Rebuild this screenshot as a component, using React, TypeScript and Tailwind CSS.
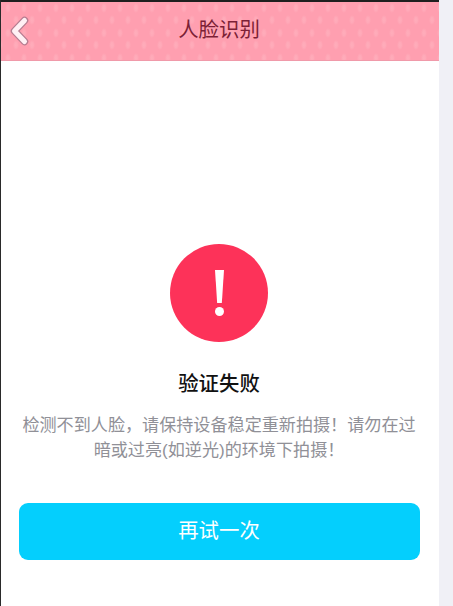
export default function App() {
  return (
    <div className="flex h-[606px] w-[453px] overflow-hidden bg-[#f0f0f6] font-['Liberation_Sans','Noto_Sans_CJK_SC',sans-serif]">
      <div className="w-px shrink-0 bg-[#2a2a2a]" />
      <div className="flex w-[438px] shrink-0 flex-col bg-white">
        <div className="h-[2px] shrink-0 bg-[#1f1f1f]" />
        <header className="relative flex h-[59px] shrink-0 items-center justify-center border-b border-[#f09aaa] bg-[#ff9fb0] bg-[radial-gradient(ellipse_3px_5px_at_8px_6px,#ffadba_0%,#ffa9b8_50%,transparent_100%),radial-gradient(ellipse_3px_5px_at_0px_18px,#ffadba_0%,#ffa9b8_50%,transparent_100%),radial-gradient(ellipse_3px_5px_at_16px_18px,#ffadba_0%,#ffa9b8_50%,transparent_100%)] bg-[length:16px_25px] bg-[position:-1px_0px]">
          <svg className="absolute left-[8px] top-[13px]" width="20" height="32" viewBox="0 0 20 32" fill="none">
            <path d="M15.5 5.5 L5.5 16 L15.5 26.5" stroke="#b57d90" strokeWidth="7.5" strokeLinecap="round" strokeLinejoin="round" />
            <path d="M15.5 5.5 L5.5 16 L15.5 26.5" stroke="#fff0f4" strokeWidth="5" strokeLinecap="round" strokeLinejoin="round" />
          </svg>
          <h1 className="mr-[2px] mb-[1px] text-[20.4px] font-normal leading-none text-[#7c1f36]">人脸识别</h1>
        </header>
        <main className="flex flex-1 flex-col items-center pl-[17px] pr-[19px]">
          <div className="mt-[183px] flex size-[98px] flex-col items-center rounded-full bg-[#fd3259]">
            <div className="ml-px mt-[26px] h-[33px] w-[9px] bg-white [clip-path:polygon(0_0,100%_0,76%_100%,24%_100%)]" />
            <div className="ml-px mt-[4px] size-[9px] rounded-full bg-white" />
          </div>
          <h2 className="mt-[28px] text-[20.4px] font-medium leading-[28px] text-[#111]">验证失败</h2>
          <p className="mt-[15px] w-[402px] text-center text-[17.1px] leading-[25px] text-[#909097]">
            检测不到人脸，请保持设备稳定重新拍摄！请勿在过暗或过亮(如逆光)的环境下拍摄！
          </p>
          <button className="mt-[40px] flex h-[57px] w-[401px] shrink-0 items-center justify-center rounded-[9px] bg-[#04cffd] text-[20.4px] text-white">
            再试一次
          </button>
        </main>
      </div>
    </div>
  );
}
